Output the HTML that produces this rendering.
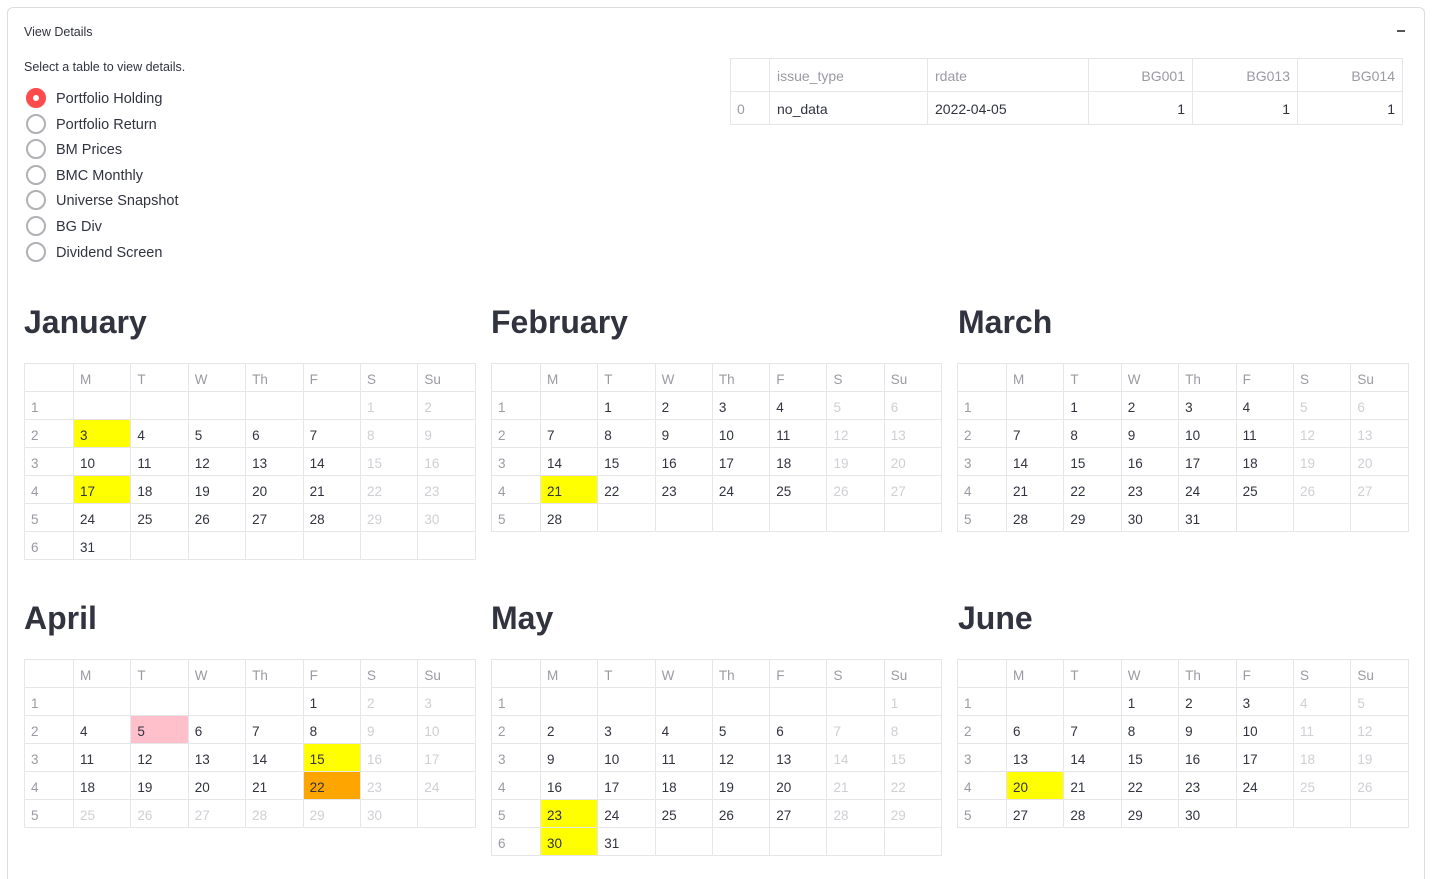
<!DOCTYPE html>
<html style="height:879px;overflow:hidden"><head><meta charset="utf-8"><style>
*{box-sizing:border-box;margin:0;padding:0}
body{width:1437px;height:879px;background:#fff;font-family:"Liberation Sans",sans-serif;color:#31333f;position:relative;overflow:hidden}
.box{position:absolute;left:7px;top:7px;width:1418px;height:872px;border:1px solid #dcdce0;border-bottom:none;border-radius:6px 6px 0 0}
.abs{position:absolute}
.radio{position:absolute;left:26px;width:20px;height:20px;border-radius:50%;border:2px solid #b0b0b5}
.radio.on{background:#ff4b4b;border-color:#ff4b4b}
.radio.on::after{content:"";position:absolute;left:5px;top:5px;width:6px;height:6px;border-radius:50%;background:#fff}
.rl{position:absolute;left:56px;font-size:14.5px;color:#31333f}
table{border-collapse:collapse;table-layout:fixed;position:absolute;font-size:13.5px}
td{border:1px solid #e6e6ea;height:28px;padding:3px 0 0 6px;white-space:nowrap;overflow:hidden;color:#31333f}
tr:first-child td{color:#9a9aa2}
td:first-child{color:#9a9aa2}
td.g{color:#cfcfd4}
td.y{background:#ffff00}
td.p{background:#ffc0cb}
td.o{background:#ffa500}
.cal td{height:28px}
.h{position:absolute;font-size:32px;font-weight:bold;color:#31333f}
.dt td{height:33px;font-size:14px;padding-top:2px;padding-left:7px}
.dt td.r{text-align:right;padding-right:7px}
</style></head><body>
<div class="box"></div>
<div class="abs" style="left:24px;top:25px;font-size:12.5px">View Details</div>
<div class="abs" style="left:1397px;top:30px;width:8px;height:2px;background:#555"></div>
<div class="abs" style="left:24px;top:60px;font-size:12.5px">Select a table to view details.</div>
<div class="radio on" style="top:88px"></div><div class="rl" style="top:91px">Portfolio Holding</div>
<div class="radio" style="top:114px"></div><div class="rl" style="top:117px">Portfolio Return</div>
<div class="radio" style="top:139px"></div><div class="rl" style="top:142px">BM Prices</div>
<div class="radio" style="top:165px"></div><div class="rl" style="top:168px">BMC Monthly</div>
<div class="radio" style="top:190px"></div><div class="rl" style="top:193px">Universe Snapshot</div>
<div class="radio" style="top:216px"></div><div class="rl" style="top:219px">BG Div</div>
<div class="radio" style="top:242px"></div><div class="rl" style="top:245px">Dividend Screen</div>

<table class="dt" style="left:730px;top:58px;width:672px">
<colgroup><col style="width:39px"><col style="width:158px"><col style="width:161px"><col style="width:104px"><col style="width:105px"><col style="width:105px"></colgroup>
<tr><td></td><td>issue_type</td><td>rdate</td><td class="r">BG001</td><td class="r">BG013</td><td class="r">BG014</td></tr>
<tr><td style="padding-left:6px">0</td><td>no_data</td><td>2022-04-05</td><td class="r">1</td><td class="r">1</td><td class="r">1</td></tr>
</table>

<div class="h" style="left:24px;top:304px">January</div>
<div class="h" style="left:491px;top:304px">February</div>
<div class="h" style="left:958px;top:304px">March</div>
<div class="h" style="left:24px;top:600px">April</div>
<div class="h" style="left:491px;top:600px">May</div>
<div class="h" style="left:958px;top:600px">June</div>

<table class="cal" style="left:24px;top:363px;width:451px">
<colgroup><col style="width:49px"><col span="7" style="width:57.4px"></colgroup>
<tr><td></td><td>M</td><td>T</td><td>W</td><td>Th</td><td>F</td><td>S</td><td>Su</td></tr>
<tr><td>1</td><td></td><td></td><td></td><td></td><td></td><td class="g">1</td><td class="g">2</td></tr>
<tr><td>2</td><td class="y">3</td><td>4</td><td>5</td><td>6</td><td>7</td><td class="g">8</td><td class="g">9</td></tr>
<tr><td>3</td><td>10</td><td>11</td><td>12</td><td>13</td><td>14</td><td class="g">15</td><td class="g">16</td></tr>
<tr><td>4</td><td class="y">17</td><td>18</td><td>19</td><td>20</td><td>21</td><td class="g">22</td><td class="g">23</td></tr>
<tr><td>5</td><td>24</td><td>25</td><td>26</td><td>27</td><td>28</td><td class="g">29</td><td class="g">30</td></tr>
<tr><td>6</td><td>31</td><td></td><td></td><td></td><td></td><td></td><td></td></tr>
</table>

<table class="cal" style="left:491px;top:363px;width:450px">
<colgroup><col style="width:49px"><col span="7" style="width:57.3px"></colgroup>
<tr><td></td><td>M</td><td>T</td><td>W</td><td>Th</td><td>F</td><td>S</td><td>Su</td></tr>
<tr><td>1</td><td></td><td>1</td><td>2</td><td>3</td><td>4</td><td class="g">5</td><td class="g">6</td></tr>
<tr><td>2</td><td>7</td><td>8</td><td>9</td><td>10</td><td>11</td><td class="g">12</td><td class="g">13</td></tr>
<tr><td>3</td><td>14</td><td>15</td><td>16</td><td>17</td><td>18</td><td class="g">19</td><td class="g">20</td></tr>
<tr><td>4</td><td class="y">21</td><td>22</td><td>23</td><td>24</td><td>25</td><td class="g">26</td><td class="g">27</td></tr>
<tr><td>5</td><td>28</td><td></td><td></td><td></td><td></td><td></td><td></td></tr>
</table>

<table class="cal" style="left:957px;top:363px;width:451px">
<colgroup><col style="width:49px"><col span="7" style="width:57.4px"></colgroup>
<tr><td></td><td>M</td><td>T</td><td>W</td><td>Th</td><td>F</td><td>S</td><td>Su</td></tr>
<tr><td>1</td><td></td><td>1</td><td>2</td><td>3</td><td>4</td><td class="g">5</td><td class="g">6</td></tr>
<tr><td>2</td><td>7</td><td>8</td><td>9</td><td>10</td><td>11</td><td class="g">12</td><td class="g">13</td></tr>
<tr><td>3</td><td>14</td><td>15</td><td>16</td><td>17</td><td>18</td><td class="g">19</td><td class="g">20</td></tr>
<tr><td>4</td><td>21</td><td>22</td><td>23</td><td>24</td><td>25</td><td class="g">26</td><td class="g">27</td></tr>
<tr><td>5</td><td>28</td><td>29</td><td>30</td><td>31</td><td></td><td></td><td></td></tr>
</table>

<table class="cal" style="left:24px;top:659px;width:451px">
<colgroup><col style="width:49px"><col span="7" style="width:57.4px"></colgroup>
<tr><td></td><td>M</td><td>T</td><td>W</td><td>Th</td><td>F</td><td>S</td><td>Su</td></tr>
<tr><td>1</td><td></td><td></td><td></td><td></td><td>1</td><td class="g">2</td><td class="g">3</td></tr>
<tr><td>2</td><td>4</td><td class="p">5</td><td>6</td><td>7</td><td>8</td><td class="g">9</td><td class="g">10</td></tr>
<tr><td>3</td><td>11</td><td>12</td><td>13</td><td>14</td><td class="y">15</td><td class="g">16</td><td class="g">17</td></tr>
<tr><td>4</td><td>18</td><td>19</td><td>20</td><td>21</td><td class="o">22</td><td class="g">23</td><td class="g">24</td></tr>
<tr><td>5</td><td class="g">25</td><td class="g">26</td><td class="g">27</td><td class="g">28</td><td class="g">29</td><td class="g">30</td><td></td></tr>
</table>

<table class="cal" style="left:491px;top:659px;width:450px">
<colgroup><col style="width:49px"><col span="7" style="width:57.3px"></colgroup>
<tr><td></td><td>M</td><td>T</td><td>W</td><td>Th</td><td>F</td><td>S</td><td>Su</td></tr>
<tr><td>1</td><td></td><td></td><td></td><td></td><td></td><td></td><td class="g">1</td></tr>
<tr><td>2</td><td>2</td><td>3</td><td>4</td><td>5</td><td>6</td><td class="g">7</td><td class="g">8</td></tr>
<tr><td>3</td><td>9</td><td>10</td><td>11</td><td>12</td><td>13</td><td class="g">14</td><td class="g">15</td></tr>
<tr><td>4</td><td>16</td><td>17</td><td>18</td><td>19</td><td>20</td><td class="g">21</td><td class="g">22</td></tr>
<tr><td>5</td><td class="y">23</td><td>24</td><td>25</td><td>26</td><td>27</td><td class="g">28</td><td class="g">29</td></tr>
<tr><td>6</td><td class="y">30</td><td>31</td><td></td><td></td><td></td><td></td><td></td></tr>
</table>

<table class="cal" style="left:957px;top:659px;width:451px">
<colgroup><col style="width:49px"><col span="7" style="width:57.4px"></colgroup>
<tr><td></td><td>M</td><td>T</td><td>W</td><td>Th</td><td>F</td><td>S</td><td>Su</td></tr>
<tr><td>1</td><td></td><td></td><td>1</td><td>2</td><td>3</td><td class="g">4</td><td class="g">5</td></tr>
<tr><td>2</td><td>6</td><td>7</td><td>8</td><td>9</td><td>10</td><td class="g">11</td><td class="g">12</td></tr>
<tr><td>3</td><td>13</td><td>14</td><td>15</td><td>16</td><td>17</td><td class="g">18</td><td class="g">19</td></tr>
<tr><td>4</td><td class="y">20</td><td>21</td><td>22</td><td>23</td><td>24</td><td class="g">25</td><td class="g">26</td></tr>
<tr><td>5</td><td>27</td><td>28</td><td>29</td><td>30</td><td></td><td></td><td></td></tr>
</table>
</body></html>
